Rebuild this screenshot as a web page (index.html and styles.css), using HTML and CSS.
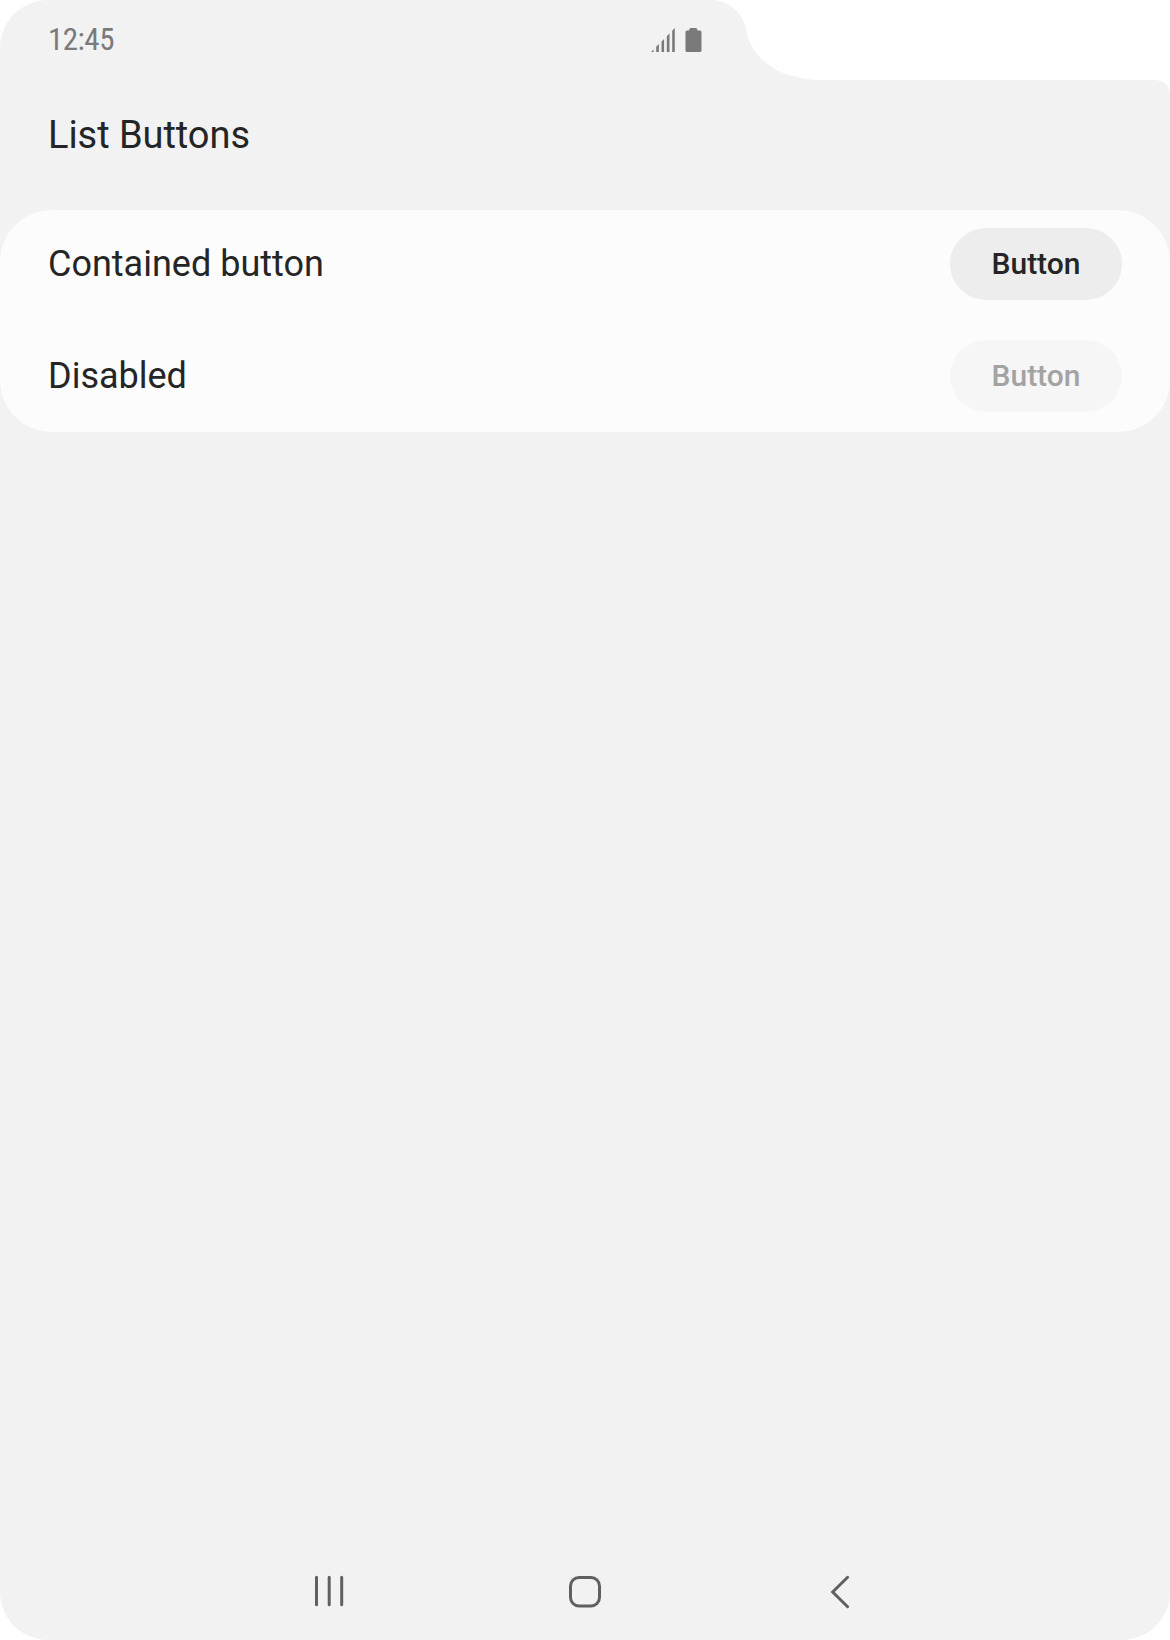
FILE: index.html
```html
<!DOCTYPE html>
<html lang="en">
<head>
<meta charset="utf-8">
<title>List Buttons</title>
<link rel="stylesheet" href="styles.css">
</head>
<body>
<div class="screen">
  <header class="status-bar">
    <span class="clock">12:45</span>
    <div class="status-icons">
      <svg class="signal" width="24" height="24" viewBox="0 0 24 24" fill="#7a7a7a">
        <path d="M0 24L2.6 21.4V24ZM5.2 18.8L7.9 16.1V24H5.2ZM10.5 13.5L13.1 10.9V24H10.5ZM15.8 8.2L18.5 5.3V24H15.8ZM21.2 2.8L23.8 0V24H21.2Z"/>
      </svg>
      <svg class="battery" width="17" height="24" viewBox="0 0 17 24" fill="#7a7a7a">
        <path d="M5.5 0H11Q12.2 0 12.5 2.5H15Q16.5 2.5 16.5 4V22.5Q16.5 24 15 24H2Q.5 24 .5 22.5V4Q.5 2.5 2 2.5H4Q4.3 0 5.5 0Z"/>
      </svg>
    </div>
  </header>
  <h1 class="title">List Buttons</h1>
  <main class="card">
    <div class="row">
      <span class="label">Contained button</span>
      <button class="button" type="button">Button</button>
    </div>
    <div class="row">
      <span class="label">Disabled</span>
      <button class="button" type="button" disabled>Button</button>
    </div>
  </main>
  <nav class="nav-bar">
    <svg width="60" height="60" viewBox="0 0 60 60" stroke="#606060" stroke-width="3" stroke-linecap="round" fill="none">
      <path d="M16.5 17.3V44.7M29.2 17.3V44.7M41.7 17.3V44.7"/>
    </svg>
    <svg width="60" height="60" viewBox="0 0 60 60" stroke="#606060" stroke-width="3" fill="none">
      <rect x="15.5" y="17.5" width="29" height="28.5" rx="8.5"/>
    </svg>
    <svg width="60" height="60" viewBox="0 0 60 60" stroke="#606060" stroke-width="3" stroke-linecap="round" fill="none">
      <path d="M37.6 17.3L22.7 32L37.6 46.7"/>
    </svg>
  </nav>
</div>
</body>
</html>
```
FILE: styles.css
```css
body {
  margin: 0;
  background: #fff;
  font-family: Roboto, "Liberation Sans", sans-serif;
  color: #252525;
}
.screen {
  display: flex;
  flex-direction: column;
  width: 1170px;
  height: 1640px;
  background: #f2f2f2;
  clip-path: path("M48 0H712C730 0 743 14 746 29C751 60 780 80 823 80H1154Q1170 80 1170 96V1592A48 48 0 0 1 1122 1640H48A48 48 0 0 1 0 1592V48A48 48 0 0 1 48 0Z");
}
.status-bar {
  display: flex;
  align-items: center;
  justify-content: space-between;
  box-sizing: border-box;
  width: 750px;
  height: 80px;
  padding: 0 48px;
}
.clock {
  padding-bottom: 2px;
  font-family: "Roboto Condensed", Roboto, sans-serif;
  font-stretch: 75%;
  font-size: 31px;
  letter-spacing: -0.5px;
  color: #7a7a7a;
}
.status-icons {
  display: flex;
  gap: 10px;
}
.title {
  margin: 0;
  padding: 32px 48px 0;
  height: 130px;
  box-sizing: border-box;
  font-size: 38px;
  line-height: 46px;
  font-weight: 400;
  letter-spacing: -0.05px;
}
.card {
  display: flex;
  flex-direction: column;
  gap: 40px;
  padding: 18px 48px 20px;
  border-radius: 52px;
  background: #fcfcfc;
}
.row {
  display: flex;
  align-items: center;
  justify-content: space-between;
  height: 72px;
}
.label {
  font-size: 36px;
}
.button {
  width: 172px;
  height: 72px;
  padding: 0 0 2px;
  border: 0;
  border-radius: 36px;
  background: #ededed;
  color: #252525;
  font-family: inherit;
  font-size: 30px;
  font-weight: 500;
}
.button:disabled {
  background: #f6f6f6;
  color: #a3a3a3;
}
.nav-bar {
  display: flex;
  justify-content: center;
  gap: 195px;
  margin-top: auto;
  padding-bottom: 20px;
}
```
